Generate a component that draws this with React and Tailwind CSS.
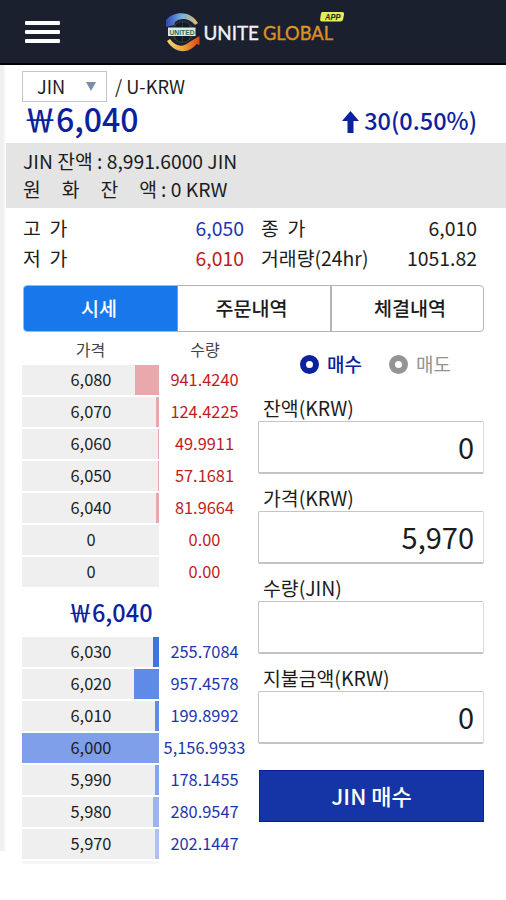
import React from 'react'

const asks = [
    { price: "6,080", amount: "941.4240", bar: 24 },
    { price: "6,070", amount: "124.4225", bar: 3 },
    { price: "6,060", amount: "49.9911", bar: 1 },
    { price: "6,050", amount: "57.1681", bar: 1 },
    { price: "6,040", amount: "81.9664", bar: 3 },
    { price: "0", amount: "0.00", bar: 0 },
    { price: "0", amount: "0.00", bar: 0 },
]

const bids = [
    { price: "6,030", amount: "255.7084", bar: 6, color: "bg-[#3f74e3]" },
    { price: "6,020", amount: "957.4578", bar: 25, color: "bg-[#5f8ae8]" },
    { price: "6,010", amount: "199.8992", bar: 4, color: "bg-[#5f8ae8]" },
    { price: "6,000", amount: "5,156.9933", bar: 137, color: "bg-[#7f9fea]" },
    { price: "5,990", amount: "178.1455", bar: 4, color: "bg-[#86a5ec]" },
    { price: "5,980", amount: "280.9547", bar: 6, color: "bg-[#9cb4ef]" },
    { price: "5,970", amount: "202.1447", bar: 4, color: "bg-[#adc1f2]" },
]

function Logo() {
    return (
        <svg width="182" height="50" viewBox="164 8 182 50">
            <defs>
                <linearGradient id="top" x1="0" x2="1">
                    <stop offset="0" stopColor="#2f45b4" />
                    <stop offset="0.5" stopColor="#74b4e2" />
                    <stop offset="1" stopColor="#e6b85c" />
                </linearGradient>
                <linearGradient id="bottom" x1="0" x2="1">
                    <stop offset="0" stopColor="#f3d777" />
                    <stop offset="0.5" stopColor="#eba43a" />
                    <stop offset="1" stopColor="#dc4310" />
                </linearGradient>
                <linearGradient id="gold" x1="0" x2="0" y1="0" y2="1">
                    <stop offset="0" stopColor="#e9a83c" />
                    <stop offset="1" stopColor="#d87f14" />
                </linearGradient>
            </defs>
            <circle cx="182.5" cy="32" r="10.5" fill="#141a24" stroke="#34424d" />
            <path d="M172 32h21M182.500 22v20M176 24q-4 8 0 16M189 24q4 8 0 16" fill="none" stroke="#34424d" strokeWidth="0.8" />
            <path d="M166 27V20C174 10.500 191 10.500 198 23l-3 2C189 17.500 180 17.500 175 22l-1 3z" fill="url(#top)" />
            <path d="M199.500 36v9l-3-1C189 54 175 54 167 41l3-2c6 8 13 8.500 19.500 3z" fill="url(#bottom)" />
            <rect x="168" y="27.500" width="27.500" height="8.500" fill="#dce9e2" />
            <text x="169.500" y="34.500" textLength="25" lengthAdjust="spacingAndGlyphs" fontFamily="Liberation Sans" fontSize="7.500" fontWeight="700" fill="#2c6b55">UNITED</text>
            <text x="203.500" y="39.500" textLength="55.500" lengthAdjust="spacingAndGlyphs" fontFamily="Lato" fontSize="20" fontWeight="400" fill="#f2f2f6" stroke="#f2f2f6" strokeWidth="0.4">UNITE</text>
            <text x="263" y="39.500" textLength="70" lengthAdjust="spacingAndGlyphs" fontFamily="Lato" fontSize="20" fontWeight="400" fill="url(#gold)" stroke="#dd8f25" strokeWidth="0.4">GLOBAL</text>
            <path d="M322 12h20q2.500 0 2 2.500l-.8 4.500q-.6 2.500-3 2.500h-18q-2.500 0-2-2.500l.6-4.500q.4-2.500 1.200-2.500z" fill="#e3ee5c" />
            <text x="325" y="20" textLength="15.500" lengthAdjust="spacingAndGlyphs" fontFamily="Liberation Sans" fontSize="8.500" fontWeight="700" fontStyle="italic" fill="#222a22">APP</text>
        </svg>
    )
}

function OrderRow({ price, amount, bar, barColor, textColor }) {
    return (
        <div className="flex h-[30px] text-[16.400px] leading-[28px]">
            <div className="relative w-[137px] bg-[#efefef] pl-px text-center text-[#1c1c1c]">
                <div className={"absolute right-0 top-0 h-full " + barColor} style={{ width: bar }} />
                <span className="relative">{price}</span>
            </div>
            <div className={"w-[91px] text-center " + textColor}>{amount}</div>
        </div>
    )
}

function Field({ label, value }) {
    return (
        <div className="h-[90px]">
            <div className="h-[24px] pl-[5px] text-[19.400px] leading-[22px]">{label}</div>
            <div className="h-[53px] rounded-[2px] border border-b-2 border-[#c4c4c4] border-r-[#dcdcdc] pr-[9px] text-right text-[29px] leading-[48px]">{value}</div>
        </div>
    )
}

function Radio({ color, label }) {
    return (
        <div className={"flex items-center gap-[8px] text-[19px] leading-[28px] " + color}>
            <span className="size-[19px] rounded-full border-[6px] border-current" />
            <span>{label}</span>
        </div>
    )
}

function App() {
    return (
        <div className="h-[900px] w-[506px] overflow-hidden bg-white font-['Noto_Sans_CJK_KR',sans-serif] text-[#1c1c1c]">
            {/* top bar */}
            <header className="flex h-[65px] border-b-2 border-black bg-[#1a202e]">
                <div className="flex w-[164px] flex-col gap-[5px] pl-[25px] pt-[21px]">
                    <span className="h-[4px] w-[35px] rounded-[1px] bg-white" />
                    <span className="h-[4px] w-[35px] rounded-[1px] bg-white" />
                    <span className="h-[4px] w-[35px] rounded-[1px] bg-white" />
                </div>
                <div className="pt-[8px]"><Logo /></div>
            </header>

            <div className="flex">
                {/* shadow of the side menu */}
                <div className="h-[786px] w-[6px] shrink-0 bg-gradient-to-r from-[#f0f0f0] from-50% to-white" />

                <main className="w-[500px]">
                    <div className="flex h-[37px] pl-[16px] pt-[6px] text-[18.200px] leading-[29px]">
                        <div className="flex h-[31px] w-[85px] items-center justify-between border border-[#c3c6ca] pl-[14px] pr-[10px]">
                            <span>JIN</span>
                            <svg width="10" height="9" viewBox="0 0 10 9"><path d="M0 0h10L5 9z" fill="#7c8ea6" /></svg>
                        </div>
                        <span className="pl-[8px] leading-[31px]">/ U-KRW</span>
                    </div>

                    <div className="flex h-[41px] items-start justify-between pl-[18px] pr-[29px] font-medium text-[#0c229c]">
                        <span className="text-[32px] leading-[32px]">￦6,040</span>
                        <div className="flex items-center gap-[5px] pt-[5px]">
                            <svg width="17" height="22" viewBox="0 0 17 22" className="mt-px"><path d="M8.500 0 17 10h-5.500v12h-6V10H0z" fill="#0c229c" /></svg>
                            <span className="text-[23.500px] leading-[30px] -mt-[2px]">30(0.50%)</span>
                        </div>
                    </div>

                    <div className="h-[65px] bg-[#e4e4e4] pl-[17px] pt-[4px] text-[19.300px] leading-[28px]">
                        <div>JIN 잔액 : 8,991.6000 JIN</div>
                        <div className="flex">
                            <span className="flex w-[134px] justify-between"><span>원</span><span>화</span><span>잔</span><span>액</span></span>
                            <span className="pl-[4px]">: 0 KRW</span>
                        </div>
                    </div>

                    <div className="grid h-[77px] grid-cols-[221px_216px] gap-x-[17px] pl-[17px] pt-[5px] text-[19.400px] leading-[30px] auto-rows-[30px]">
                        <div className="flex justify-between"><span className="whitespace-pre">고  가</span><span className="text-[#1d35ad]">6,050</span></div>
                        <div className="flex justify-between"><span className="whitespace-pre">종  가</span><span>6,010</span></div>
                        <div className="flex justify-between"><span className="whitespace-pre">저  가</span><span className="text-[#c01a22]">6,010</span></div>
                        <div className="flex justify-between"><span>거래량(24hr)</span><span>1051.82</span></div>
                    </div>

                    {/* tabs */}
                    <div className="ml-[17px] flex h-[47px] w-[461px] overflow-hidden rounded-[4px] border border-[#b5b5b5] text-center text-[19.600px] font-medium leading-[44px]">
                        <div className="-m-px w-[155px] bg-[#1877ea] pr-[3px] pt-px text-white">시세</div>
                        <div className="w-[153px] border-l border-[#999] pr-[5px]">주문내역</div>
                        <div className="flex-1 border-l-2 border-[#b5b5b5] pl-[5px]">체결내역</div>
                    </div>

                    <div className="flex">
                        {/* order book */}
                        <div className="w-[252px] pl-[16px] pt-[5px]">
                            <div className="flex h-[28px] text-[16px] leading-[25px] text-[#444]">
                                <span className="w-[137px] text-center">가격</span>
                                <span className="w-[92px] text-center">수량</span>
                            </div>
                            <div className="flex flex-col gap-[2px]">
                                {asks.map((row, i) => (
                                    <OrderRow key={i} {...row} barColor="bg-[#e9a9ac]" textColor="text-[#c01a22]" />
                                ))}
                            </div>
                            <div className="h-[50px] w-[177px] text-center text-[23.500px] font-medium leading-[51px] text-[#0c229c]">￦6,040</div>
                            <div className="flex flex-col gap-[2px]">
                                {bids.map((row, i) => (
                                    <OrderRow key={i} {...row} barColor={row.color} textColor="text-[#1d35ad]" />
                                ))}
                                <div className="h-[3px] w-[137px] bg-[#f6f6f6]" />
                            </div>
                        </div>

                        {/* buy form */}
                        <div className="w-[226px] pt-[18px]">
                            <div className="flex h-[47px] items-start gap-[27px] pl-[42px]">
                                <Radio color="text-[#0c229c] font-medium" label="매수" />
                                <Radio color="text-[#949494]" label="매도" />
                            </div>
                            <Field label="잔액(KRW)" value="0" />
                            <Field label="가격(KRW)" value="5,970" />
                            <Field label="수량(JIN)" value="" />
                            <Field label="지불금액(KRW)" value="0" />
                            <button className="mt-[13px] block h-[52px] w-[225px] border border-[#0a1f9a] bg-[#1534a6] ml-px pb-[2px] text-[22px] font-medium leading-[46px] text-white">JIN 매수</button>
                        </div>
                    </div>
                </main>
            </div>
        </div>
    )
}

export default App
